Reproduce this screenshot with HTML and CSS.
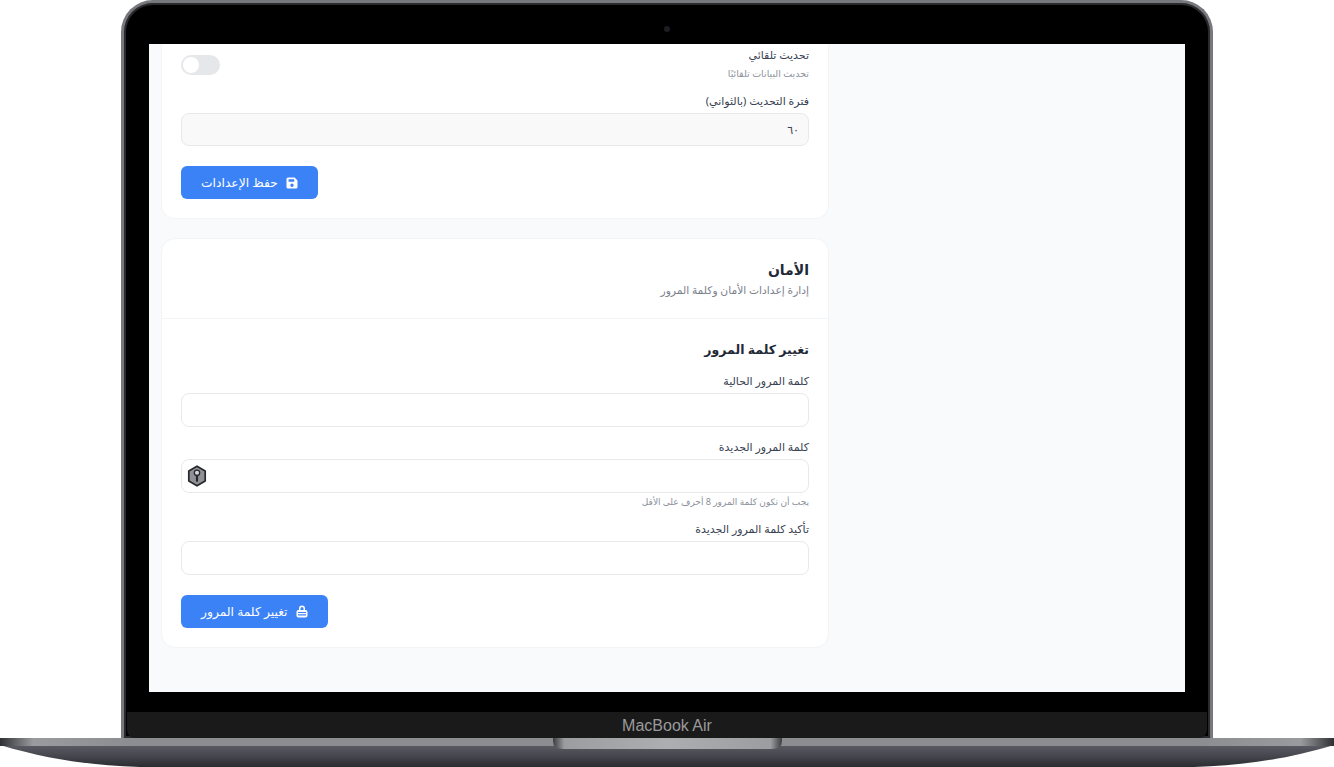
FILE: index.html
```html
<!DOCTYPE html>
<html lang="ar">
<head>
  <meta charset="UTF-8" />
  <meta name="viewport" content="width=device-width, initial-scale=1.0" />
  <title>الإعدادات</title>
  <link rel="stylesheet" href="styles.css">
</head>
<body>
  <div class="laptop">
    <div class="lid">
      <span class="camera"></span>
      <div class="screen" dir="rtl">
        <section class="card card-clipped">
          <div class="card-body">
            <div class="toggle-row">
              <div>
                <div class="label">تحديث تلقائي</div>
                <div class="hint">تحديث البيانات تلقائيًا</div>
              </div>
              <span class="toggle"><span class="knob"></span></span>
            </div>
            <div class="field field-last">
              <label class="label">فترة التحديث (بالثواني)</label>
              <input class="input input-filled" type="text" value="٦٠" />
            </div>
            <button class="btn">
              <svg class="btn-icon" viewBox="0 0 12 12"><path fill="#fff" fill-rule="evenodd" d="M2 .5h6.600L11.500 3.400V10A1.500 1.500 0 0 1 10 11.500H2A1.500 1.500 0 0 1 .5 10V2A1.500 1.500 0 0 1 2 .5zM2.600 2.200v2.600h5.600V2.200zM6 6.600a1.700 1.700 0 1 0 0 3.400 1.700 1.700 0 0 0 0-3.400z"/></svg>
              <span>حفظ الإعدادات</span>
            </button>
          </div>
        </section>

        <section class="card">
          <div class="card-head">
            <h2>الأمان</h2>
            <p>إدارة إعدادات الأمان وكلمة المرور</p>
          </div>
          <div class="card-body">
            <h3>تغيير كلمة المرور</h3>
            <div class="field">
              <label class="label">كلمة المرور الحالية</label>
              <input class="input" type="password" />
            </div>
            <div class="field">
              <label class="label">كلمة المرور الجديدة</label>
              <div class="input-wrap">
                <input class="input" type="password" />
                <svg class="pw-badge" viewBox="0 0 20 22">
                  <path fill="#8f9196" stroke="#26282c" stroke-width="1.700" stroke-linejoin="round" d="M10 1.200l8.200 4.700v10.200L10 20.800 1.800 16.100V5.900z"/>
                  <circle cx="10" cy="7.800" r="2.700" fill="#d5d6d9" stroke="#26282c" stroke-width="1.300"/>
                  <path fill="#26282c" d="M8.900 10h2.200v6l-1.100 1.300L8.900 16z"/>
                </svg>
              </div>
              <div class="hint hint-small">يجب أن تكون كلمة المرور 8 أحرف على الأقل</div>
            </div>
            <div class="field field-last">
              <label class="label">تأكيد كلمة المرور الجديدة</label>
              <input class="input" type="password" />
            </div>
            <button class="btn">
              <svg class="btn-icon btn-icon-lock" viewBox="0 0 12 13"><path fill="#fff" fill-rule="evenodd" d="M3 5V3.500a3 3 0 0 1 6 0V5h.6a1.900 1.900 0 0 1 1.900 1.900v3.700a1.900 1.900 0 0 1-1.900 1.900H2.400a1.900 1.900 0 0 1-1.900-1.900V6.900A1.900 1.900 0 0 1 2.400 5zM4.500 5h3V3.500a1.500 1.500 0 0 0-3 0zM2 7v1.100h8V7zM2 9.300v1.200h8V9.300z"/></svg>
              <span>تغيير كلمة المرور</span>
            </button>
          </div>
        </section>
      </div>
      <div class="chin">MacBook Air</div>
    </div>
    <svg class="base" viewBox="0 0 1334 29" width="1334" height="29">
      <defs>
        <linearGradient id="strip" x1="0" x2="1" y1="0" y2="0">
          <stop offset="0" stop-color="#2f3034"/>
          <stop offset=".025" stop-color="#9a9b9f"/>
          <stop offset=".1" stop-color="#8c8d91"/>
          <stop offset=".9" stop-color="#8c8d91"/>
          <stop offset=".975" stop-color="#9a9b9f"/>
          <stop offset="1" stop-color="#2f3034"/>
        </linearGradient>
        <linearGradient id="belly" x1="0" x2="0" y1="0" y2="1">
          <stop offset="0" stop-color="#5b5c63"/>
          <stop offset=".5" stop-color="#46474e"/>
          <stop offset="1" stop-color="#2b2c31"/>
        </linearGradient>
        <linearGradient id="notch" x1="0" x2="1" y1="0" y2="0">
          <stop offset="0" stop-color="#3c3d41"/>
          <stop offset=".05" stop-color="#9c9da1"/>
          <stop offset=".5" stop-color="#adaeb1"/>
          <stop offset=".95" stop-color="#9c9da1"/>
          <stop offset="1" stop-color="#3c3d41"/>
        </linearGradient>
      </defs>
      <path fill="url(#belly)" d="M0 7C50 22 90 27 140 29H1194C1244 27 1284 22 1334 7z"/>
      <rect width="1334" height="8" fill="url(#strip)"/>
      <path fill="url(#notch)" d="M553 0H782V3Q782 11 772 11H563Q553 11 553 3z"/>
    </svg>
  </div>
</body>
</html>
```

FILE: styles.css
```css
* {
  box-sizing: border-box;
}
html, body {
  margin: 0;
  padding: 0;
  background: #fff;
  overflow: hidden;
}
body {
  width: 1334px;
  height: 767px;
  font-family: "Noto Sans", "DejaVu Sans", sans-serif;
}

/* laptop frame */
.laptop {
  display: flex;
  flex-direction: column;
  width: 1334px;
  height: 767px;
}
.lid {
  position: relative;
  width: 1092px;
  height: 738px;
  margin: 0 121px;
  padding: 41px 25px 0;
  background: #000;
  border: 3px solid #77787d;
  border-bottom: 0;
  border-radius: 32px 32px 0 0;
  box-shadow: inset 0 0 0 2px #2a2a2d;
}
.camera {
  position: absolute;
  top: 23px;
  left: 540px;
  width: 6px;
  height: 6px;
  border-radius: 50%;
  background: #1c1d22;
}
.screen {
  height: 648px;
  padding: 0 12px;
  background: #f9fafb;
  overflow: hidden;
  display: flex;
  flex-direction: column;
  align-items: flex-start;
  gap: 19px;
}
.chin {
  height: 26px;
  margin: 20px -22px 0;
  background: #1a1a1a;
  border-radius: 0 0 8px 8px;
  color: #9a9a9c;
  font-family: "Liberation Sans", Arial, sans-serif;
  font-size: 16px;
  line-height: 28px;
  text-align: center;
}
.base {
  display: block;
  flex: none;
}

/* page inside the screen */
.card {
  flex: none;
  width: 668px;
  margin-right: auto;
  background: #fff;
  border: 1px solid #f3f4f6;
  border-radius: 14px;
}
.card-clipped {
  border-top: 0;
  border-radius: 0 0 14px 14px;
}
.card-clipped .card-body {
  padding-top: 3px;
}
.card-body {
  padding: 20px 19px 19px;
}
.card-head {
  height: 80px;
  padding: 20px 19px 0;
  border-bottom: 1px solid #f3f4f6;
}
.card-head h2 {
  margin: 0;
  font-size: 14px;
  line-height: 21px;
  font-weight: 700;
  color: #1f2937;
}
.card-head p {
  margin: 3px 0 0;
  font-size: 10.7px;
  line-height: 15px;
  color: #7b818c;
}
.card-body h3 {
  margin: 0 0 12px;
  font-size: 12.5px;
  line-height: 22px;
  font-weight: 600;
  color: #1f2937;
}
.label {
  display: block;
  font-size: 11px;
  line-height: 16px;
  color: #374151;
}
.hint {
  margin-top: 3px;
  font-size: 9.5px;
  line-height: 16px;
  color: #8b919b;
}
.hint-small {
  margin-top: 2px;
  font-size: 9px;
  line-height: 14px;
}
.toggle-row {
  display: flex;
  justify-content: space-between;
  align-items: flex-start;
  margin-bottom: 11px;
}
.toggle {
  display: block;
  width: 39px;
  height: 20px;
  margin-top: 8px;
  padding: 2px;
  background: #e5e7eb;
  border-radius: 10px;
}
.knob {
  display: block;
  width: 16px;
  height: 16px;
  margin-right: 19px;
  background: #fff;
  border-radius: 50%;
}
.field {
  margin-bottom: 12px;
}
.field-last {
  margin-bottom: 20px;
}
.field .label {
  margin-bottom: 4px;
}
.input {
  display: block;
  width: 100%;
  height: 34px;
  padding: 0 9px;
  background: #fff;
  border: 1px solid #e8e9eb;
  border-radius: 8px;
  font-family: inherit;
  font-size: 11px;
  color: #374151;
  outline: none;
}
.input-filled {
  height: 33px;
  background: #f9f9f9;
}
.input-wrap {
  position: relative;
}
.pw-badge {
  position: absolute;
  top: 6px;
  left: 6px;
  width: 20px;
  height: 22px;
}
.btn {
  display: flex;
  align-items: center;
  gap: 8px;
  width: fit-content;
  height: 33px;
  margin-right: auto;
  padding: 0 20px;
  background: #3b82f6;
  border: 0;
  border-radius: 6px;
  color: #fff;
  font-family: inherit;
  font-size: 12.3px;
  cursor: pointer;
}
.btn-icon {
  width: 12px;
  height: 12px;
  flex: none;
}
.btn-icon-lock {
  height: 13px;
}
```
